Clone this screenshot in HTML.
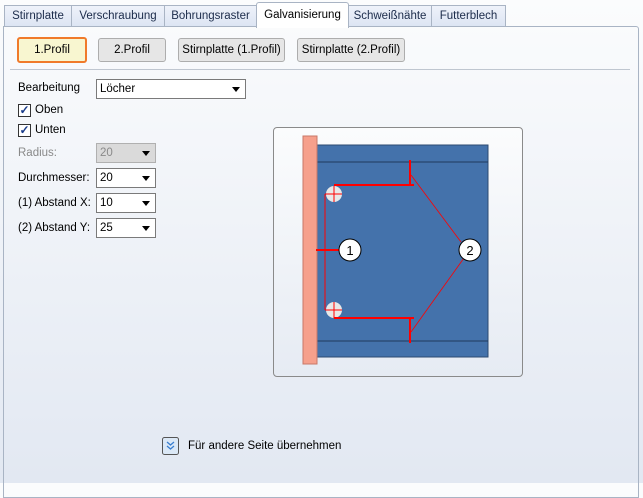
<!DOCTYPE html>
<html><head><style>
body{margin:0;width:643px;height:483px;overflow:hidden;font-family:"Liberation Sans",sans-serif;font-size:11.5px;color:#000;background:linear-gradient(#fbfcfd,#e2e8f2);position:relative}
.a{position:absolute}
.tab{position:absolute;top:5px;height:20px;border:1px solid #a9b4c4;border-bottom:none;background:linear-gradient(#eef2fa,#dde5f3);line-height:20px;text-align:center;color:#1b2b4a}
.btn{position:absolute;top:38px;height:22px;border:1px solid #adadad;border-radius:3px;background:#e6e6e6;line-height:22px;text-align:center}
.dd{position:absolute;left:96px;width:55px;height:18px;border:1px solid #7a7a7a;background:#fff;line-height:18px;padding-left:3px;box-sizing:content-box}
.dd:after{content:"";position:absolute;right:5px;top:7px;border:4px solid transparent;border-top:5px solid #000;border-bottom:none}
.cb{position:absolute;left:18px;width:11px;height:11px;border:1px solid #333;background:#fff;font-size:12px;line-height:11px;text-align:center;color:#1a3c8a;font-weight:bold}
</style></head><body>
<div class="a" style="left:3px;top:26px;width:634px;height:470px;border:1px solid #a9b4c4;border-radius:0 3px 0 0"></div>
<div class="tab" style="left:4px;width:66px">Stirnplatte</div>
<div class="tab" style="left:71px;width:92px">Verschraubung</div>
<div class="tab" style="left:164px;width:91px">Bohrungsraster</div>
<div class="tab" style="left:256px;top:2px;height:25px;width:91px;background:#fff;line-height:25px;color:#000;border-radius:3px 3px 0 0">Galvanisierung</div>
<div class="tab" style="left:348px;width:82px">Schweißnähte</div>
<div class="tab" style="left:431px;width:73px">Futterblech</div>
<div class="btn" style="left:17px;width:66px;border:2px solid #f07a2a;background:#f8f6d0;top:37px">1.Profil</div>
<div class="btn" style="left:98px;width:66px">2.Profil</div>
<div class="btn" style="left:178px;width:105px">Stirnplatte (1.Profil)</div>
<div class="btn" style="left:297px;width:106px">Stirnplatte (2.Profil)</div>
<div class="a" style="left:10px;top:69px;width:620px;height:1px;background:#bfc6d0"></div>
<div class="a" style="left:18px;top:82px">Bearbeitung</div>
<div class="dd" style="top:79px;width:145px">Löcher</div>
<div class="cb" style="top:104px">✓</div><div class="a" style="left:35px;top:104px">Oben</div>
<div class="cb" style="top:124px">✓</div><div class="a" style="left:35px;top:124px">Unten</div>
<div class="a" style="left:18px;top:147px;color:#8a8a8a">Radius:</div>
<div class="dd" style="top:143px;background:#dadada;border-color:#b0b0b0;color:#8a8a8a">20</div>
<div class="a" style="left:18px;top:172px">Durchmesser:</div><div class="dd" style="top:168px">20</div>
<div class="a" style="left:18px;top:197px">(1) Abstand X:</div><div class="dd" style="top:193px">10</div>
<div class="a" style="left:18px;top:222px">(2) Abstand Y:</div><div class="dd" style="top:218px">25</div>
<div class="a" style="left:273px;top:127px;width:248px;height:248px;border:1px solid #8a8a8a;border-radius:4px;background:linear-gradient(#fbfcfd,#e6ebf3)"></div>
<svg class="a" style="left:0;top:0" width="643" height="483">
<rect x="317" y="145" width="171" height="212" fill="#4472ab" stroke="#2d4a70"/>
<line x1="317" y1="162" x2="488" y2="162" stroke="#203a5c"/>
<line x1="317" y1="341" x2="488" y2="341" stroke="#203a5c"/>
<rect x="303" y="136" width="14" height="228" fill="#f6a08c" stroke="#c87868"/>
<circle cx="334" cy="194" r="8" fill="#e8e8e8"/><circle cx="334" cy="310" r="8" fill="#e8e8e8"/>
<g stroke="#f00" fill="none">
<line x1="325" y1="194" x2="342" y2="194"/><line x1="334" y1="186" x2="334" y2="202"/>
<line x1="325" y1="310" x2="342" y2="310"/><line x1="334" y1="302" x2="334" y2="318"/>
<line x1="325" y1="194" x2="325" y2="310"/>
<line x1="316" y1="250" x2="340" y2="250" stroke-width="2"/>
<line x1="334" y1="185" x2="414" y2="185" stroke-width="2"/>
<line x1="334" y1="318" x2="414" y2="318" stroke-width="2"/>
<line x1="410" y1="160" x2="410" y2="185" stroke-width="2"/>
<line x1="410" y1="318" x2="410" y2="343" stroke-width="2"/>
<line x1="411" y1="175" x2="461" y2="242" stroke-width="0.8"/>
<line x1="411" y1="332" x2="464" y2="258" stroke-width="0.8"/>
</g>
<circle cx="350" cy="250" r="11" fill="#fff" stroke="#000"/>
<circle cx="470" cy="250" r="11" fill="#fff" stroke="#000"/>
<text x="350" y="255" font-size="13" text-anchor="middle" font-family="Liberation Sans">1</text>
<text x="470" y="255" font-size="13" text-anchor="middle" font-family="Liberation Sans">2</text>
<rect x="162.5" y="437.5" width="16" height="17" rx="2" fill="#dbe8f6" stroke="#555"/>
<path d="M167 442l3.5 3 3.5-3M167 446l3.5 3 3.5-3" stroke="#3a7fd0" fill="none" stroke-width="1.3"/>
</svg>
<div class="a" style="left:188px;top:440px">Für andere Seite übernehmen</div>
</body></html>
